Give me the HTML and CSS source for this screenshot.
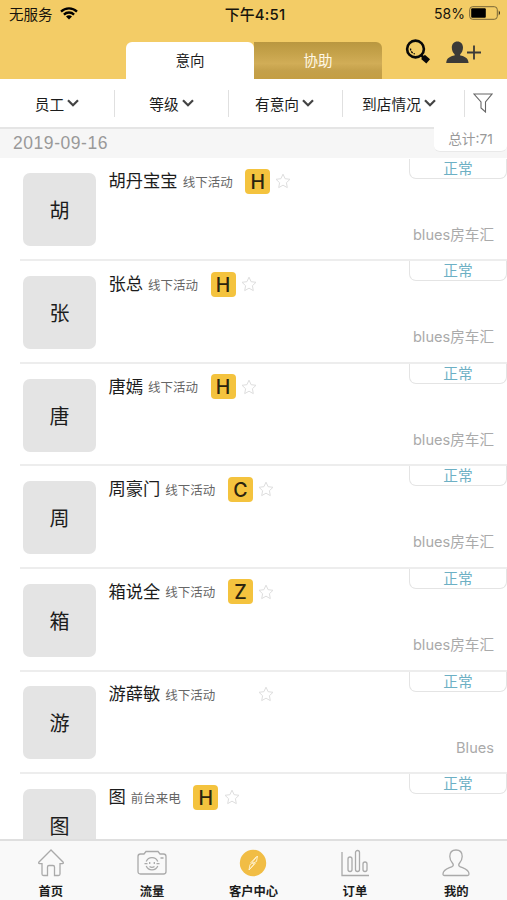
FILE: index.html
```html
<!DOCTYPE html>
<html lang="zh-CN">
<head>
<meta charset="utf-8">
<title>客户中心</title>
<link rel="stylesheet" href="styles.css">
</head>
<body>
<svg width="0" height="0" class="defs">
  <symbol id="star" viewBox="0 0 16 16"><path d="M8 1.2l2.1 4.5 4.9.6-3.6 3.4.9 4.9L8 12.2l-4.3 2.4.9-4.9L1 6.3l4.9-.6z"/></symbol>
  <symbol id="chev" viewBox="0 0 12 8"><path d="M1 1.2l5 5 5-5"/></symbol>
</svg>
<div class="app">
  <header class="top">
    <div class="status">
      <div class="carrier"><span>无服务</span>
        <svg class="wifi" viewBox="0 0 18 13"><path d="M1 4.6a11.4 11.4 0 0 1 16 0M3.900 7.600a7.300 7.300 0 0 1 10.200 0"/><path class="dot" d="M9 12.400L6 9.600a4.300 4.300 0 0 1 6 0z"/></svg>
      </div>
      <div class="clock">下午4:51</div>
      <div class="power"><span>58%</span>
        <svg class="battery" viewBox="0 0 32 14"><rect class="case" x=".7" y=".7" width="27.6" height="12.6" rx="3"/><rect x="2.2" y="2.2" width="14.6" height="9.6" rx="1"/><path d="M29.8 4.6q2 2.4 0 4.8z"/></svg>
      </div>
    </div>
    <div class="bar">
      <div class="tab on">意向</div><div class="tab off">协助</div>
      <svg class="search" viewBox="0 0 26 26"><circle cx="10.500" cy="10" r="8.400"/><path class="shine" d="M5.500 9.500a5.400 5.400 0 0 0 4.400 5.400"/><path class="neck" d="M16 16l3 3"/><path class="grip" d="M18 17.800l5.200 4.600"/></svg>
      <svg class="adduser" viewBox="0 0 36 23"><path d="M11.400.5c3.400 0 5.600 2.600 5.600 6 0 2.800-1.200 5.400-2.800 6.700v1.200c4.500.8 8.100 2.400 8.400 7.600H.2c.3-5.200 3.900-6.800 8.400-7.600v-1.200C7 11.900 5.800 9.300 5.800 6.500c0-3.400 2.200-6 5.600-6z"/><path class="plus" d="M21 11.500h14M28 4.500v14"/></svg>
    </div>
  </header>
  <nav class="filters">
    <div class="f f1">员工<svg class="chev"><use href="#chev"/></svg></div>
    <div class="f f2">等级<svg class="chev"><use href="#chev"/></svg></div>
    <div class="f f3">有意向<svg class="chev"><use href="#chev"/></svg></div>
    <div class="f f4">到店情况<svg class="chev"><use href="#chev"/></svg></div>
    <div class="f f5"><svg class="funnel" viewBox="0 0 20 20"><path d="M1 1h18l-6.500 8v10L8 15V9z"/></svg></div>
  </nav>
  <div class="day"><span class="date">2019-09-16</span><span class="total">总计:71</span></div>
  <main class="list">
    <section class="row"><div class="avatar">胡</div><div class="info"><span class="name">胡丹宝宝</span><span class="src">线下活动</span><b class="grade">H</b><svg class="star"><use href="#star"/></svg></div><div class="side"><span class="state">正常</span><span class="shop">blues房车汇</span></div></section>
    <section class="row"><div class="avatar">张</div><div class="info"><span class="name">张总</span><span class="src">线下活动</span><b class="grade">H</b><svg class="star"><use href="#star"/></svg></div><div class="side"><span class="state">正常</span><span class="shop">blues房车汇</span></div></section>
    <section class="row"><div class="avatar">唐</div><div class="info"><span class="name">唐嫣</span><span class="src">线下活动</span><b class="grade">H</b><svg class="star"><use href="#star"/></svg></div><div class="side"><span class="state">正常</span><span class="shop">blues房车汇</span></div></section>
    <section class="row"><div class="avatar">周</div><div class="info"><span class="name">周豪门</span><span class="src">线下活动</span><b class="grade">C</b><svg class="star"><use href="#star"/></svg></div><div class="side"><span class="state">正常</span><span class="shop">blues房车汇</span></div></section>
    <section class="row"><div class="avatar">箱</div><div class="info"><span class="name">箱说全</span><span class="src">线下活动</span><b class="grade">Z</b><svg class="star"><use href="#star"/></svg></div><div class="side"><span class="state">正常</span><span class="shop">blues房车汇</span></div></section>
    <section class="row"><div class="avatar">游</div><div class="info"><span class="name">游薛敏</span><span class="src">线下活动</span><b class="grade none"></b><svg class="star"><use href="#star"/></svg></div><div class="side"><span class="state">正常</span><span class="shop">Blues</span></div></section>
    <section class="row"><div class="avatar">图</div><div class="info"><span class="name">图</span><span class="src">前台来电</span><b class="grade">H</b><svg class="star"><use href="#star"/></svg></div><div class="side"><span class="state">正常</span></div></section>
  </main>
  <footer class="tabs">
    <div class="t"><svg viewBox="0 0 28 28"><path d="M14 1L1.800 13.200q-.6 1.300.8 1.400H5V25q0 1.500 1.500 1.500h4V18q0-1.500 1.500-1.500h4q1.500 0 1.500 1.500v8.500h4Q23 26.500 23 25V14.600h2.400q1.400-.1.800-1.400z"/></svg><span>首页</span></div>
    <div class="t"><svg class="cam" viewBox="0 0 30 28"><path d="M3.500 5H7l2-2.500h12L23 5h3.500Q29 5 29 7.500v15q0 2.500-2.500 2.500h-23Q1 25 1 22.500v-15Q1 5 3.500 5z"/><path d="M9.200 12.500a6.300 6.300 0 0 1 11.600 0M20.800 17a6.300 6.300 0 0 1-11.600 0M7.500 14.700h3M19.500 14.700h3M12.700 13v2M17.300 13v2M12.500 17.500q2.500 1.800 5 0M23.500 9h3"/></svg><span>流量</span></div>
    <div class="t"><svg class="compass" viewBox="0 0 28 28"><circle cx="14" cy="14" r="13.200"/><path d="M18.500 7l-1 5.500-3.500 1.700-1-.7zM10 21l1-5.500 3-1.600 1.300.8zM17.500 7.500l-6 6.500M10.500 20.500l6-6.500"/></svg><span>客户中心</span></div>
    <div class="t"><svg viewBox="0 0 28 28"><path d="M1 3v23.500h27"/><rect x="7" y="8" width="4" height="14.500" rx="2"/><rect x="14.500" y="1.500" width="4" height="21" rx="2"/><rect x="22" y="13" width="4" height="9.500" rx="2"/></svg><span>订单</span></div>
    <div class="t"><svg viewBox="0 0 28 28"><path d="M14 1c4 0 6.200 2.800 6.200 6.500 0 2.800-1.400 5-2.600 6.500-1.100 1.500-1.500 2.500.4 3.600 3.500 1.800 9 2.700 9 7.400q0 1.500-1.500 1.500h-23Q1 26.500 1 25c0-4.700 5.500-5.600 9-7.400 1.900-1.100 1.500-2.100.4-3.600C9.200 12.500 7.800 10.300 7.800 7.500 7.800 3.800 10 1 14 1z"/></svg><span>我的</span></div>
  </footer>
</div>
</body>
</html>
```
FILE: styles.css
```css
* { box-sizing: border-box; }
body { margin: 0; font-family: "Liberation Sans", "Noto Sans CJK SC", sans-serif; color: #1c1c1c; background: #fff; }
svg { fill: none; flex: none; }
.defs { position: absolute; }
.app { width: 507px; height: 900px; display: flex; flex-direction: column; overflow: hidden; }
.top { height: 79px; flex: none; background: #f3cc66; display: flex; flex-direction: column; }
.status { height: 26px; display: grid; grid-template-columns: 1fr auto 1fr; align-items: center; padding: 0 6px 0 9px; font-size: 14.5px; color: #17140c; }
.carrier, .power { display: flex; align-items: center; gap: 7px; }
.power { justify-content: flex-end; gap: 4px; font-family: Inter, sans-serif; font-size: 14px; }
.clock { font-family: Inter, "Noto Sans CJK SC", sans-serif; font-weight: 500; font-size: 14.9px; letter-spacing: .2px; }
.wifi { width: 18px; height: 13px; stroke: #000; stroke-width: 2.3; }
.wifi .dot { fill: #000; stroke: none; }
.battery { width: 32px; height: 14px; fill: #000; }
.battery .case { fill: none; stroke: #786637; stroke-width: 1; }
.bar { height: 53px; padding: 16px 24px 0 126px; display: flex; }
.tab { width: 128px; height: 37px; font-size: 14.5px; line-height: 39px; text-align: center; }
.on { background: #fff; border-radius: 6px 6px 0 0; }
.off { color: #fff8e6; border-radius: 0 6px 0 0; background: linear-gradient(#b99740, #c5a24a 30%, #d1ad57 58%, #c4a04a 78%, #c49e43); }
.search { width: 26px; height: 26px; margin: -3px 0 0 23px; stroke: #080808; stroke-width: 2.6; }
.search .shine { stroke-width: 1.3; stroke-dasharray: 2 1; }
.search .grip { stroke-width: 5.6; }
.adduser { width: 36px; height: 23px; margin: -1px 0 0 15px; fill: #3b3a38; }
.adduser .plus { stroke: #3b3a38; stroke-width: 1.8; }
.filters { height: 48px; flex: none; display: grid; grid-template-columns: 115px 114px 114px 122px 42px; align-items: center; }
.f { height: 27px; display: flex; align-items: center; justify-content: center; gap: 3px; font-size: 14.7px; border-right: 1px solid #e0e0e0; }
.f3 { padding-right: 2px; }
.f4 { padding-right: 9px; }
.f5 { border: 0; padding-right: 7px; }
.chev { width: 12px; height: 8px; stroke: #444; stroke-width: 2.2; }
.funnel { width: 20px; height: 20px; stroke: #666; stroke-width: 1.1; }
.day { height: 31px; flex: none; background: #f6f6f6; border-top: 2px solid #e5e5e5; display: flex; justify-content: space-between; align-items: flex-start; }
.date { padding-left: 13px; font-family: "Liberation Sans", sans-serif; font-size: 17.5px; line-height: 29px; color: #999; letter-spacing: .55px; }
.total { width: 73px; height: 25px; margin-top: -2px; border-radius: 0 0 6px 6px; background: #fff; border-bottom: 1px solid #e9e9e9; text-align: center; font-family: Inter, "Noto Sans CJK SC", sans-serif; font-size: 13.7px; line-height: 24px; color: #999; }
.list { flex: 1; overflow: hidden; padding-left: 20px; margin-top: .7px; }
.row { height: 102.6px; border-bottom: 2px solid #ededed; display: flex; padding-left: 3px; }
.avatar { width: 73px; height: 73px; margin-top: 14.7px; border-radius: 7px; background: #e4e4e4; font-size: 20px; line-height: 76px; text-align: center; flex: none; }
.info { flex: 1; display: flex; align-items: center; height: 26px; margin: 9.8px 0 0 12.5px; white-space: nowrap; }
.name { font-size: 17.3px; line-height: 26px; }
.src { margin: 3px 0 0 5px; font-size: 12.5px; line-height: 20px; color: #666; }
.grade { width: 25px; height: 25px; margin-left: 12.5px; border-radius: 4px; background: #f4c33e; color: #2b240f; font-family: Inter, sans-serif; font-weight: 500; font-size: 19.5px; line-height: 26px; text-align: center; }
.none { background: none; }
.star { width: 16px; height: 16px; margin-left: 5.3px; stroke: #dedede; stroke-width: 1; }
.side { width: 98px; display: flex; flex-direction: column; flex: none; }
.state { height: 20px; border: 1px solid #e4e4e4; border-top: 0; border-radius: 0 0 7px 7px; color: #6db0c4; font-size: 14.7px; line-height: 21px; text-align: center; }
.shop { margin-top: 46px; padding-right: 13px; text-align: right; font-family: Inter, "Noto Sans CJK SC", sans-serif; font-size: 14.6px; line-height: 20px; color: #aaa; white-space: nowrap; }
.tabs { height: 61px; flex: none; border-top: 2px solid #dfdfdf; background: #f9f9f9; display: grid; grid-template-columns: repeat(5, 1fr); }
.t { display: flex; flex-direction: column; align-items: center; padding-top: 8px; font-size: 12.3px; line-height: 18px; font-weight: 700; }
.t svg { width: 28px; height: 28px; stroke: #aaa; stroke-width: 1.3; margin-bottom: 6px; }
.t .cam { width: 30px; }
.t .compass circle { fill: #f1bd45; stroke: none; }
.t .compass path { stroke: #fff4d5; stroke-width: .9; }
```
